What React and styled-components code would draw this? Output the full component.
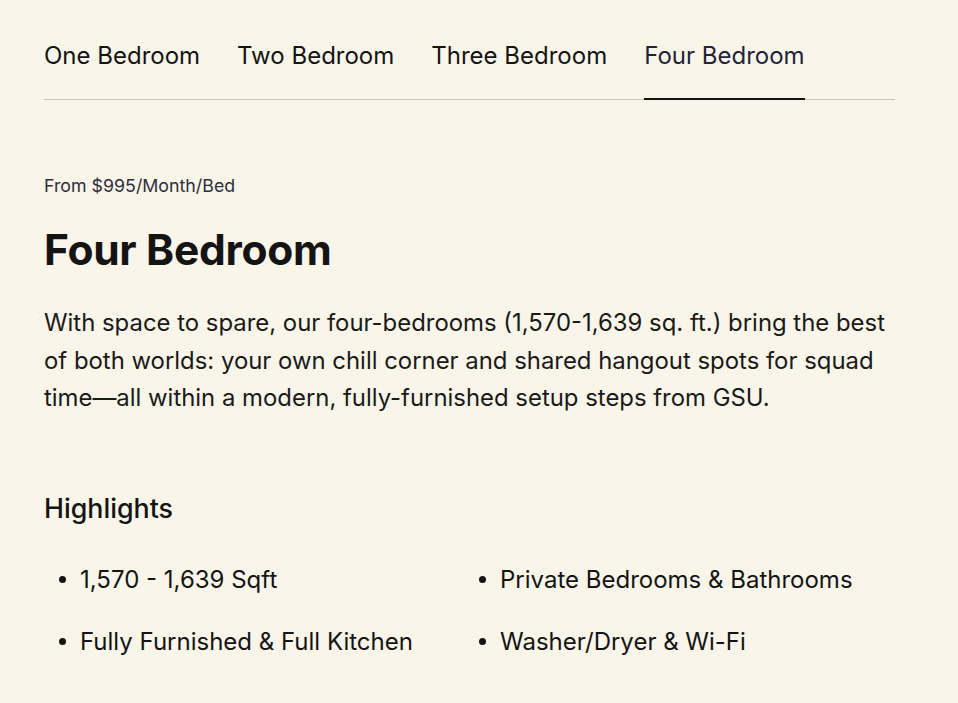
import React from "react";
import styled, { createGlobalStyle } from "styled-components";

const Global = createGlobalStyle`
  html, body { margin: 0; padding: 0; background: #f9f5e8; }
  body { font-family: Inter, "Noto Sans", sans-serif; color: #141414; }
  * { box-sizing: border-box; }
`;

const Page = styled.div`
  padding: 36px 63px 40px 44px;
`;

const Tabs = styled.nav`
  display: flex;
  gap: 37px;
  border-bottom: 1px solid #c9c5b9;
`;

const Tab = styled.button`
  appearance: none;
  background: none;
  border: none;
  padding: 4px 0 26px;
  margin-bottom: -1px;
  font-family: inherit;
  font-size: 24px;
  font-weight: 400;
  line-height: 32px;
  color: ${(p) => (p.$active ? "#23233a" : "#141414")};
  border-bottom: 2px solid ${(p) => (p.$active ? "#141414" : "transparent")};
  cursor: pointer;
`;

const Content = styled.section`
  padding-top: 74px;
`;

const Price = styled.p`
  margin: 0;
  font-size: 17.8px;
  line-height: 24px;
  color: #2e2e3e;
`;

const Title = styled.h1`
  margin: 26px 0 0;
  font-size: 42.5px;
  font-weight: 700;
  line-height: 52px;
  letter-spacing: -0.3px;
  color: #141414;
`;

const Description = styled.p`
  margin: 28px 0 0;
  max-width: 856px;
  font-size: 23.9px;
  line-height: 37.5px;
  color: #1a1a1a;
`;

const SubTitle = styled.h2`
  margin: 73px 0 0;
  font-size: 26.8px;
  font-weight: 500;
  line-height: 36px;
  color: #141414;
`;

const List = styled.ul`
  margin: 36px 0 0;
  padding: 0;
  list-style: none;
  display: grid;
  grid-template-columns: 420px 1fr;
  row-gap: 26px;
`;

const Item = styled.li`
  display: flex;
  align-items: center;
  font-size: 24px;
  line-height: 36px;
  color: #141414;
  &::before {
    content: "";
    width: 7px;
    height: 7px;
    border-radius: 50%;
    background: #141414;
    margin: 0 14px 0 15px;
    flex: none;
  }
`;

const tabs = ["One Bedroom", "Two Bedroom", "Three Bedroom", "Four Bedroom"];
const highlights = [
  "1,570 - 1,639 Sqft",
  "Private Bedrooms & Bathrooms",
  "Fully Furnished & Full Kitchen",
  "Washer/Dryer & Wi-Fi",
];

export default function App() {
  return (
    <>
      <Global />
      <Page>
        <Tabs>
          {tabs.map((t) => (
            <Tab key={t} $active={t === "Four Bedroom"}>
              {t}
            </Tab>
          ))}
        </Tabs>
        <Content>
          <Price>From $995/Month/Bed</Price>
          <Title>Four Bedroom</Title>
          <Description>
            With space to spare, our four-bedrooms (1,570-1,639 sq. ft.) bring the best of both
            worlds: your own chill corner and shared hangout spots for squad time—all within a
            modern, fully-furnished setup steps from GSU.
          </Description>
          <SubTitle>Highlights</SubTitle>
          <List>
            {highlights.map((h) => (
              <Item key={h}>{h}</Item>
            ))}
          </List>
        </Content>
      </Page>
    </>
  );
}
